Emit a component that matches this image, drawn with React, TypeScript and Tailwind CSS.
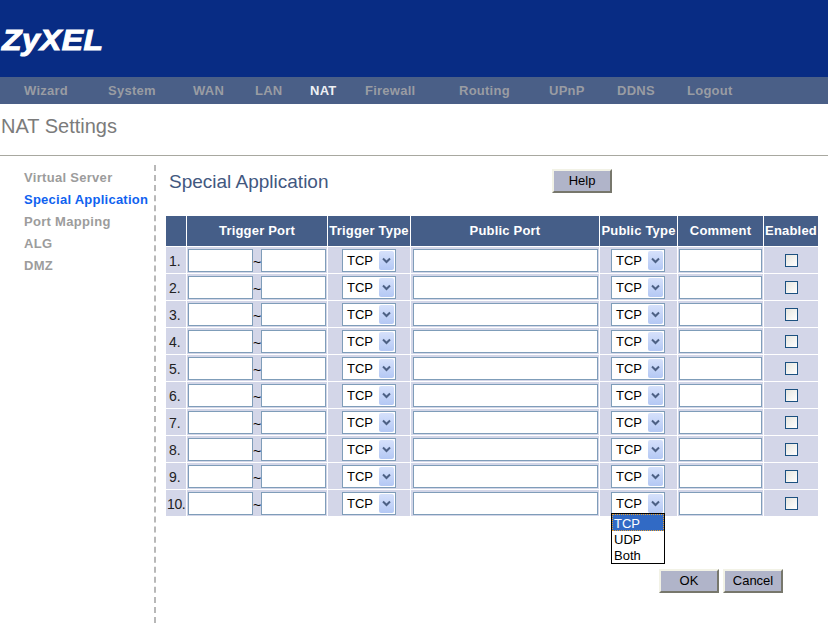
const navItems = [
  { label: "Wizard", width: "w-[84px]" },
  { label: "System", width: "w-[85px]" },
  { label: "WAN", width: "w-[62px]" },
  { label: "LAN", width: "w-[55px]" },
  { label: "NAT", width: "w-[55px]", active: true },
  { label: "Firewall", width: "w-[94px]" },
  { label: "Routing", width: "w-[90px]" },
  { label: "UPnP", width: "w-[68px]" },
  { label: "DDNS", width: "w-[70px]" },
  { label: "Logout", width: "w-[60px]" },
];

const sideItems = ["Virtual Server", "Special Application", "Port Mapping", "ALG", "DMZ"];
const rows = [1, 2, 3, 4, 5, 6, 7, 8, 9, 10];

function TextBox({ className }: { className: string }) {
  return (
    <input
      type="text"
      className={`h-[23px] border border-[#7f9db9] bg-white outline-none ${className}`}
    />
  );
}

function FakeSelect({ open, className }: { open?: boolean; className: string }) {
  return (
    <div className={`relative flex h-[23px] w-[54px] items-center border border-[#7f9db9] bg-white pl-[4px] pr-[1px] text-[13px] leading-none text-black ${className}`}>
      <span className="flex-1">TCP</span>
      <span className="flex h-[19px] w-[15px] items-center justify-center rounded-[2px] bg-gradient-to-b from-[#d6e1fb] to-[#b4c8f4]">
        <svg width="9" height="7" viewBox="0 0 9 7">
          <path d="M1 1.5 L4.5 5 L8 1.5" fill="none" stroke="#4d6185" strokeWidth="2" />
        </svg>
      </span>
      {open && (
        <div className="absolute left-[-1px] top-[20px] z-10 w-[54px] border border-black bg-white text-[13px] leading-[16px] text-black">
          <div className="h-[17px] border border-dotted border-[#e8a030] bg-[#316ac5] pl-[1px] pt-[1px] text-white">TCP</div>
          <div className="h-[16px] pl-[2px] pt-[1px]">UDP</div>
          <div className="h-[16px] pl-[2px] pt-[1px]">Both</div>
        </div>
      )}
    </div>
  );
}

function ActionButton({ label, className }: { label: string; className?: string }) {
  return (
    <button
      type="button"
      className={`h-[24px] w-[60px] border-2 border-t-[#f2f2e6] border-l-[#f2f2e6] border-r-[#77776c] border-b-[#77776c] bg-[#b0b4c9] text-[13px] text-black ${className ?? ""}`}
    >
      {label}
    </button>
  );
}

export default function App() {
  return (
    <div className="h-[635px] w-[828px] overflow-hidden bg-white font-['Liberation_Sans',Arial,sans-serif]">
      <header className="flex h-[77px] items-start bg-[#082c84] pl-[2px] pt-[22px]">
        <span className="inline-block origin-left scale-x-[1.1] text-[29px] font-bold italic leading-[36px] tracking-[0.4px] text-white [-webkit-text-stroke:1px_white]">
          ZyXEL
        </span>
      </header>

      <nav className="flex h-[27px] items-center bg-[#4a5f87] pl-[24px] text-[13px] font-bold tracking-[0.25px]">
        {navItems.map((item) => (
          <span
            key={item.label}
            className={`${item.width} ${item.active ? "text-[#eef0f4]" : "text-[#999ca3]"}`}
          >
            {item.label}
          </span>
        ))}
      </nav>

      <div className="flex h-[52px] items-start border-b border-[#a8a8a0] pl-[1px] pt-[11px] text-[20px] leading-[23px] text-[#7b7b7b]">
        NAT Settings
      </div>

      <div className="flex pt-[9px]">
        <aside className="flex h-[458px] w-[156px] flex-col gap-[6px] border-r-2 border-dashed border-[#b8b8b8] pl-[24px] pt-[5px] text-[13px] font-bold leading-[16px] tracking-[0.3px] text-[#9c9c9c]">
          {sideItems.map((item) => (
            <span key={item} className={item === "Special Application" ? "text-[#0f62f0] tracking-[0.25px]" : ""}>
              {item}
            </span>
          ))}
        </aside>

        <main className="w-[662px] pl-[10px]">
          <div className="flex h-[50px] items-start">
            <h2 className="ml-[3px] mt-[5px] w-[383px] text-[19px] leading-[24px] text-[#42587f]">Special Application</h2>
            <ActionButton label="Help" className="mt-[4px]" />
          </div>

          <table className="table-fixed border-separate border-spacing-[1px] text-[14px] text-[#222] -ml-[1px] w-[654px]">
            <colgroup>
              <col className="w-[20px]" />
              <col className="w-[140px]" />
              <col className="w-[82px]" />
              <col className="w-[188px]" />
              <col className="w-[77px]" />
              <col className="w-[85px]" />
              <col className="w-[54px]" />
            </colgroup>
            <thead>
              <tr className="h-[30px] bg-[#455e88] text-center text-[13px] font-bold tracking-[0.2px] text-white">
                <th className="p-0"></th>
                <th className="p-0">Trigger Port</th>
                <th className="p-0 whitespace-nowrap">Trigger Type</th>
                <th className="p-0">Public Port</th>
                <th className="p-0 whitespace-nowrap">Public Type</th>
                <th className="p-0">Comment</th>
                <th className="p-0">Enabled</th>
              </tr>
            </thead>
            <tbody>
              {rows.map((row) => (
                <tr key={row} className="h-[26px] bg-[#d3d6e8]">
                  <td className={`p-0 pt-[2px] whitespace-nowrap ${row === 10 ? "pl-[1px] tracking-[-0.4px]" : "pl-[3px]"}`}>{row}.</td>
                  <td className="p-0">
                    <div className="flex items-center pl-[1px]">
                      <TextBox className="w-[65px]" />
                      <span className="w-[8px] pt-[4px] text-center text-[14px] leading-none text-black">~</span>
                      <TextBox className="w-[65px]" />
                    </div>
                  </td>
                  <td className="p-0">
                    <FakeSelect className="ml-[14px]" />
                  </td>
                  <td className="p-0">
                    <TextBox className="ml-[2px] block w-[185px]" />
                  </td>
                  <td className="p-0">
                    <FakeSelect className="ml-[11px]" open={row === 10} />
                  </td>
                  <td className="p-0">
                    <TextBox className="ml-[1px] block w-[83px]" />
                  </td>
                  <td className="p-0">
                    <div className="mx-auto h-[13px] w-[13px] border border-[#1c5180] bg-gradient-to-br from-[#e6e6df] to-white"></div>
                  </td>
                </tr>
              ))}
            </tbody>
          </table>

          <div className="mt-[52px] flex justify-start gap-[4px] pl-[493px]">
            <ActionButton label="OK" />
            <ActionButton label="Cancel" />
          </div>
        </main>
      </div>
    </div>
  );
}
